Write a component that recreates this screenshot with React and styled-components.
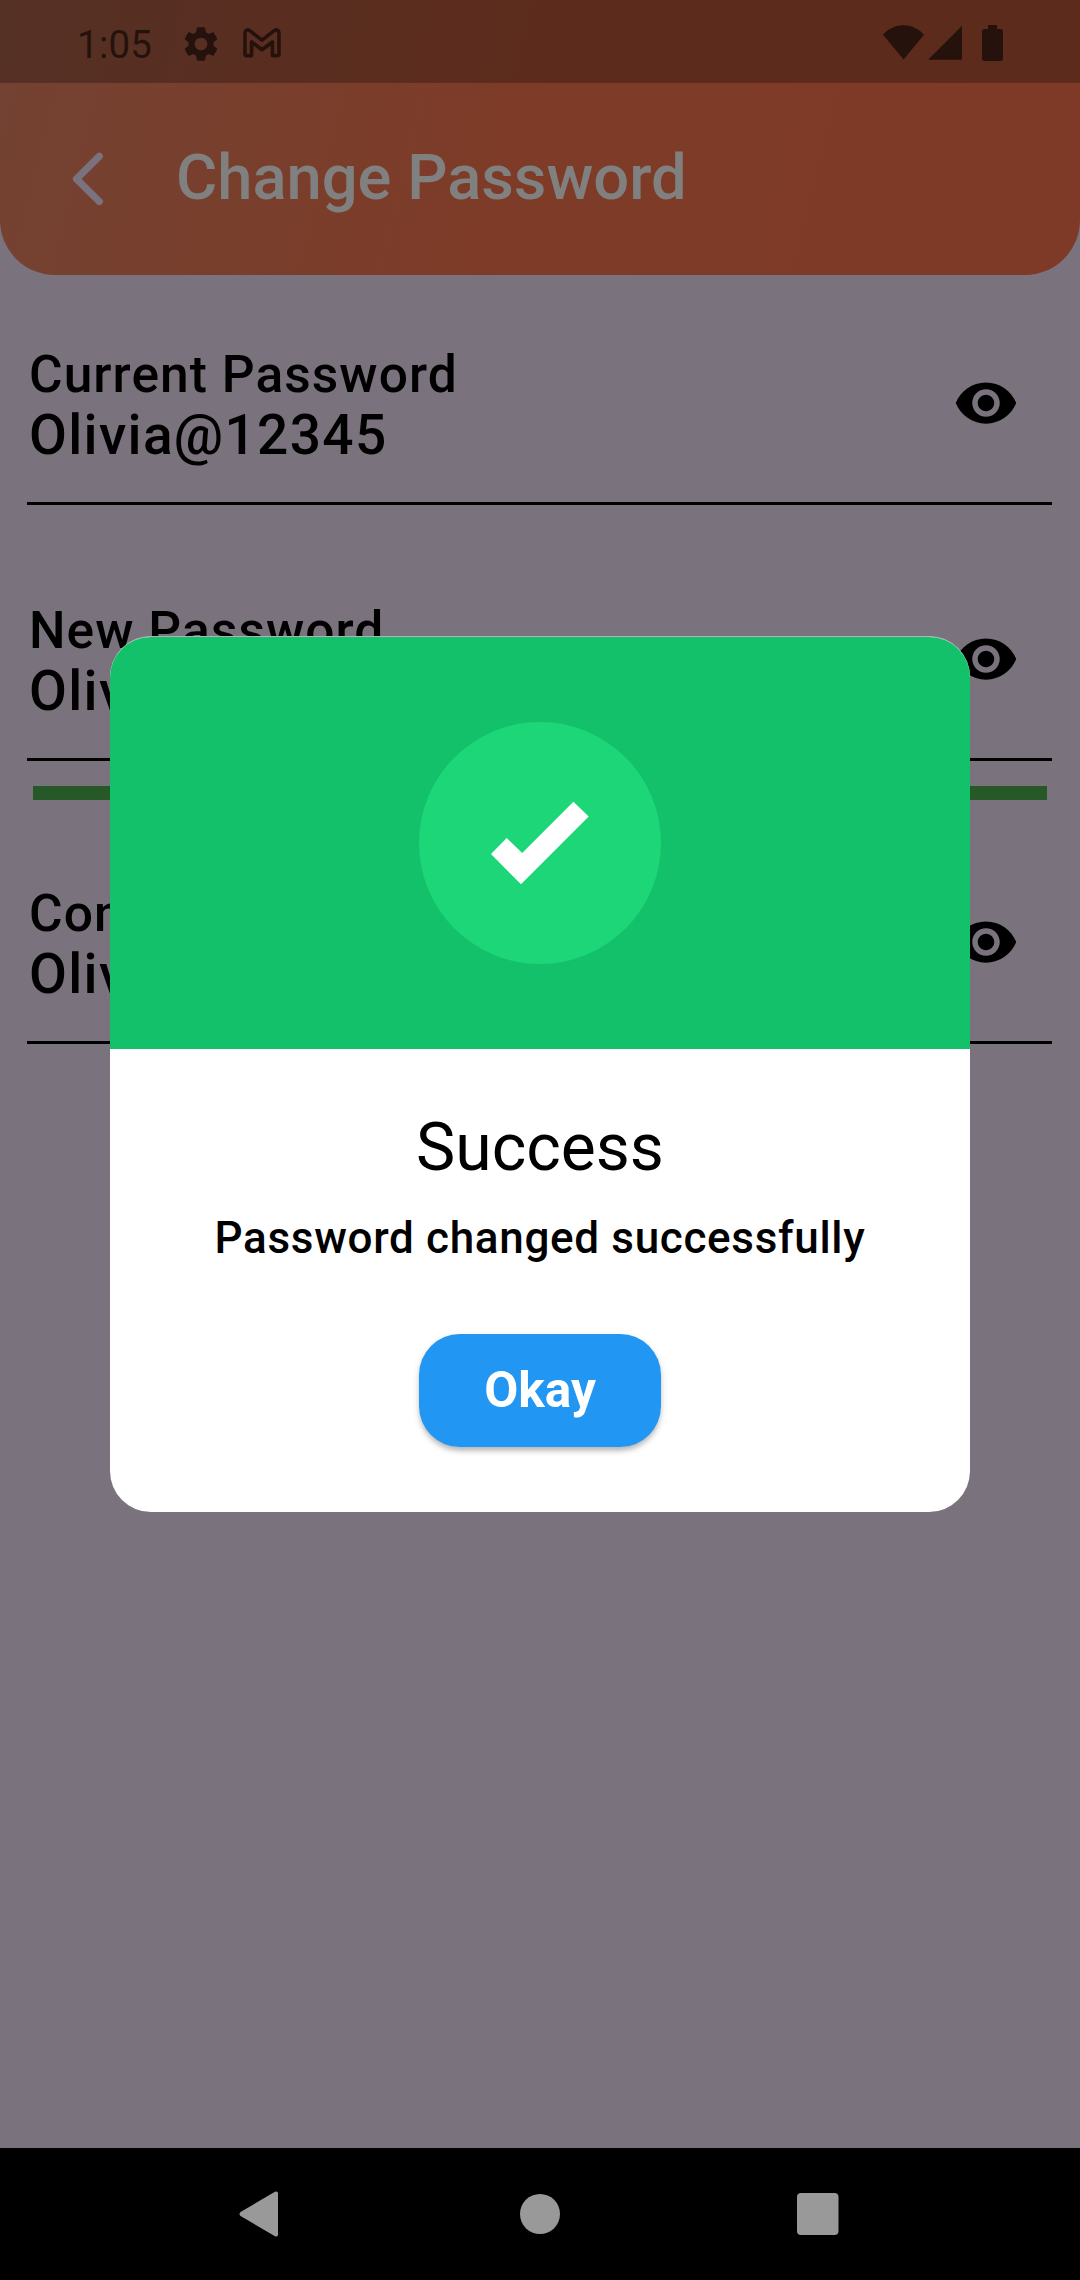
import React from "react";
import styled, { createGlobalStyle } from "styled-components";

const GlobalStyle = createGlobalStyle`
  body { margin: 0; background: #7a727d; }
  * { box-sizing: border-box; }
`;

const Screen = styled.div`
  position: relative;
  display: flex;
  flex-direction: column;
  width: 1080px;
  height: 2280px;
  overflow: hidden;
  background: #7a727d;
  color: #000;
  font-family: Roboto, "Liberation Sans", sans-serif;
`;

const Header = styled.header`
  flex: none;
  height: 275px;
  border-radius: 0 0 55px 55px;
  overflow: hidden;
  background: linear-gradient(104.3deg, #734232 0%, #7e3b27 50%, #7e3a27 100%);
`;

const StatusBar = styled.div`
  display: flex;
  justify-content: space-between;
  height: 83px;
  padding: 0 77px 0 77px;
  background: rgba(0, 0, 0, 0.26);
  color: #26120d;
`;

const StatusGroup = styled.div`
  display: flex;
  align-items: flex-start;
`;

const Clock = styled.span`
  width: 103px;
  padding-top: 22px;
  font-size: 38.5px;
  line-height: 46px;
  letter-spacing: 0.25px;
`;

const Glyph = styled.svg`
  display: block;
  flex: none;
  width: ${(p) => p.$w}px;
  height: ${(p) => p.$h}px;
  margin: ${(p) => p.$m || "0"};
  fill: currentColor;
`;

const TitleBar = styled.div`
  display: flex;
  align-items: center;
  height: 192px;
  padding: 0 0 0 66px;
`;

const BackButton = styled.button`
  display: flex;
  width: 110px;
  padding: 0;
  border: 0;
  background: none;
  color: #7a727e;
`;

const Title = styled.h1`
  margin: 0;
  padding-bottom: 4px;
  font-size: 63.25px;
  font-weight: 500;
  line-height: 76px;
  color: #808080;
`;

const Form = styled.main`
  flex: 1;
  display: flex;
  flex-direction: column;
  padding: 69px 28px 0 27px;
`;

const Field = styled.label`
  display: flex;
  justify-content: space-between;
  height: ${(p) => p.$height}px;
  border-bottom: 3px solid #000;
`;

const FieldText = styled.div`
  display: flex;
  flex-direction: column;
  font-weight: 500;
  padding-left: 2px;
  white-space: nowrap;
`;

const FieldLabel = styled.span`
  font-size: 51.5px;
  line-height: 61px;
  letter-spacing: 1.05px;
`;

const FieldValue = styled.span`
  font-size: 55px;
  line-height: 60px;
  letter-spacing: 1.33px;
`;

const Gap = styled.div`
  height: ${(p) => p.$height}px;
`;

const Strength = styled.div`
  height: 14px;
  margin: 25px 5px 83px 6px;
  background: #275828;
`;

const NavBar = styled.nav`
  flex: none;
  display: flex;
  align-items: center;
  justify-content: space-between;
  height: 132px;
  padding: 0 241px 0 238px;
  background: #000;
  color: #999;
`;

const Dialog = styled.section`
  position: absolute;
  top: 636px;
  left: 110px;
  display: flex;
  flex-direction: column;
  width: 860px;
  height: 876px;
  overflow: hidden;
  border-radius: 41px;
  background: #fff;
  border-top: 1px solid #b7afb9;
`;

const DialogBanner = styled.div`
  display: flex;
  align-items: center;
  justify-content: center;
  height: 412px;
  background: #14c16b;
`;

const Badge = styled.div`
  display: flex;
  align-items: center;
  justify-content: center;
  width: 242px;
  height: 242px;
  border-radius: 50%;
  background: #1cd678;
  color: #fff;
`;

const DialogBody = styled.div`
  display: flex;
  flex-direction: column;
  align-items: center;
  padding-top: 60px;
`;

const DialogTitle = styled.h2`
  margin: 0;
  font-size: 66px;
  font-weight: 400;
  line-height: 78px;
`;

const DialogMessage = styled.p`
  margin: 25px 0 0;
  font-size: 44px;
  font-weight: 500;
  line-height: 52px;
  letter-spacing: 0.68px;
`;

const OkayButton = styled.button`
  width: 242px;
  height: 113px;
  margin: 70px 0 0;
  padding: 0 0 2px;
  border: 0;
  border-radius: 41px;
  background: #2196f3;
  box-shadow: 0 5px 5px -2px rgba(0, 0, 0, 0.16), 0 4px 6px rgba(0, 0, 0, 0.12), 0 2px 9px rgba(0, 0, 0, 0.07);
  color: #fff;
  font-family: inherit;
  font-size: 49.5px;
  font-weight: 700;
`;

const Eye = () => (
  <Glyph $w={66} $h={66} $m="26px 33px 0 0" viewBox="0 0 24 24">
    <path d="M12 4.5C7 4.5 2.73 7.61 1 12c1.73 4.39 6 7.5 11 7.5s9.27-3.11 11-7.5c-1.73-4.39-6-7.5-11-7.5zM12 17c-2.76 0-5-2.24-5-5s2.24-5 5-5 5 2.24 5 5-2.24 5-5 5zm0-8c-1.66 0-3 1.34-3 3s1.34 3 3 3 3-1.34 3-3-1.34-3-3-3z" />
  </Glyph>
);

const PasswordField = ({ label, value, height }) => (
  <Field $height={height}>
    <FieldText>
      <FieldLabel>{label}</FieldLabel>
      <FieldValue>{value}</FieldValue>
    </FieldText>
    <Eye />
  </Field>
);

export default function App() {
  return (
    <Screen>
      <GlobalStyle />
      <Header>
        <StatusBar>
          <StatusGroup>
            <Clock>1:05</Clock>
            <Glyph $w={42} $h={42} $m="22.5px 0 0 0" viewBox="0 0 24 24">
              <path d="M19.14 12.94c.04-.3.06-.61.06-.94 0-.32-.02-.64-.07-.94l2.03-1.58c.18-.14.23-.41.12-.61l-1.92-3.32c-.12-.22-.37-.29-.59-.22l-2.39.96c-.5-.38-1.03-.7-1.62-.94l-.36-2.54c-.04-.24-.24-.41-.48-.41h-3.84c-.24 0-.43.17-.47.41l-.36 2.54c-.59.24-1.13.57-1.62.94l-2.39-.96c-.22-.08-.47 0-.59.22L2.74 8.87c-.12.21-.08.47.12.61l2.03 1.58c-.05.3-.09.63-.09.94s.02.64.07.94l-2.03 1.58c-.18.14-.23.41-.12.61l1.92 3.32c.12.22.37.29.59.22l2.39-.96c.5.38 1.03.7 1.62.94l.36 2.54c.05.24.24.41.48.41h3.84c.24 0 .44-.17.47-.41l.36-2.54c.59-.24 1.13-.56 1.62-.94l2.39.96c.22.08.47 0 .59-.22l1.92-3.32c.12-.22.07-.47-.12-.61l-2.01-1.58zM12 15.6c-1.98 0-3.6-1.62-3.6-3.6s1.62-3.6 3.6-3.6 3.6 1.62 3.6 3.6-1.62 3.6-3.6 3.6z" />
            </Glyph>
            <Glyph $w={38} $h={30} $m="27.5px 0 0 21px" viewBox="0 0 38 30">
              <path
                d="M2 26V5.2C2 2.2 4.4 1 6.8 2.7L19 12.2 31.2 2.7C33.6 1 36 2.2 36 5.2V26Q36 27.6 34.4 27.6H29.4V14L19 21.8 8.6 14V27.6H3.6Q2 27.6 2 26Z"
                fill="none"
                stroke="currentColor"
                strokeWidth="3.6"
                strokeLinejoin="round"
              />
            </Glyph>
          </StatusGroup>
          <StatusGroup>
            <Glyph $w={41} $h={35} $m="25px 0 0" viewBox="0 0 41 35">
              <path d="M0 9.7C5.6 3.6 12.6.3 20.5.3S35.4 3.6 41 9.7L20.5 34.5Z" />
            </Glyph>
            <Glyph $w={34} $h={35} $m="25px 0 0 3.7px" viewBox="0 0 34 35">
              <path d="M0 34.7L34 .7V34.7Z" />
            </Glyph>
            <Glyph $w={21} $h={36} $m="25px 0 0 20.3px" viewBox="0 0 21 36">
              <path d="M6 0h9v4h3.5Q21 4 21 6.500v27Q21 36 18.500 36h-16Q0 36 0 33.500v-27Q0 4 2.500 4H6Z" />
            </Glyph>
          </StatusGroup>
        </StatusBar>
        <TitleBar>
          <BackButton aria-label="Back">
            <Glyph $w={44} $h={56} viewBox="0 0 44 56">
              <path
                d="M33.300 5.200L10.500 28 33.300 50.500"
                fill="none"
                stroke="currentColor"
                strokeWidth="7.200"
                strokeLinecap="round"
                strokeLinejoin="round"
              />
            </Glyph>
          </BackButton>
          <Title>Change Password</Title>
        </TitleBar>
      </Header>

      <Form>
        <PasswordField label="Current Password" value="Olivia@12345" height={161} />
        <Gap $height={95} />
        <PasswordField label="New Password" value="Olivia@12345" height={161} />
        <Strength />
        <PasswordField label="Confirm Password" value="Olivia@12345" height={161} />
      </Form>

      <NavBar>
        <Glyph $w={45} $h={46} viewBox="0 0 45 46">
          <path d="M37 .8Q40 -.5 40 2.500V43.500Q40 46.500 37 45.200L2.500 25Q.5 23 2.500 21Z" />
        </Glyph>
        <Glyph $w={40} $h={40} viewBox="0 0 40 40">
          <circle cx="20" cy="20" r="20" />
        </Glyph>
        <Glyph $w={42} $h={42} viewBox="0 0 42 42">
          <rect width="41.5" height="42" rx="4" />
        </Glyph>
      </NavBar>

      <Dialog>
        <DialogBanner>
          <Badge>
            <Glyph $w={98} $h={84} viewBox="0 0 98 84">
              <path d="M0 53L15.700 37 31.200 52 82.400 .7 97.700 15.400 30 83.300Z" />
            </Glyph>
          </Badge>
        </DialogBanner>
        <DialogBody>
          <DialogTitle>Success</DialogTitle>
          <DialogMessage>Password changed successfully</DialogMessage>
          <OkayButton>Okay</OkayButton>
        </DialogBody>
      </Dialog>
    </Screen>
  );
}
